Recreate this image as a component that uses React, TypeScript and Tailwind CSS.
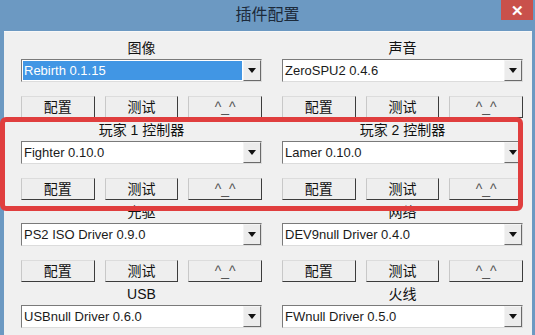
import React from "react";

const FONT = { fontFamily: '"Liberation Sans", "Noto Sans CJK SC", sans-serif' };

function Dropdown({ value, selected }: { value: string; selected?: boolean }) {
  return (
    <div className="flex h-[23px] w-[241px] border border-t-[#7a7a7a] border-l-[#7a7a7a] border-r-[#dcdcdc] border-b-[#dcdcdc] bg-white">
      <div className="flex flex-1 items-stretch p-[1px]">
        <div
          className={
            "flex flex-1 items-center pl-[1px] text-[13px] leading-none " +
            (selected ? "bg-[#4196e4] text-white" : "text-[#1a1a1a]")
          }
        >
          {value}
        </div>
      </div>
      <div className="flex w-[18px] items-center justify-center border border-t-[#f4f4f4] border-l-[#f4f4f4] border-r-[#6a6a6a] border-b-[#6a6a6a] bg-[#ececec]">
        <svg width="8" height="5" viewBox="0 0 8 5">
          <path d="M0 0 H8 L4 5 Z" fill="#111" />
        </svg>
      </div>
    </div>
  );
}

function Btn({ children, light }: { children: React.ReactNode; light?: boolean }) {
  return (
    <div
      className={
        "flex h-[22px] items-center justify-center border border-t-[#dcdcdc] border-l-[#c8c8c8] border-r-[#3c3c3c] border-b-[#3c3c3c] bg-[#eeeeee] text-[14px] leading-none " +
        (light ? "text-[#555]" : "text-[#111]")
      }
    >
      {children}
    </div>
  );
}

function Group({
  label,
  value,
  selected,
  buttons = true,
}: {
  label: string;
  value: string;
  selected?: boolean;
  buttons?: boolean;
}) {
  return (
    <div className="flex w-[241px] flex-col">
      <div className="flex h-[19px] items-start justify-center text-[14px] leading-[17px] text-[#111]">
        {label}
      </div>
      <Dropdown value={value} selected={selected} />
      {buttons && (
        <div className="mt-[14px] mb-[4px] grid grid-cols-3 gap-[10px]">
          <Btn>配置</Btn>
          <Btn>测试</Btn>
          <Btn light>^_^</Btn>
        </div>
      )}
    </div>
  );
}

export default function App() {
  return (
    <div className="relative h-[335px] w-[535px] overflow-hidden bg-[#6c99c2]" style={FONT}>
      <div className="flex h-[31px] items-center justify-center pb-[1px] text-[16px] text-[#1c2a3a]">
        插件配置
      </div>
      <div className="absolute right-[2px] top-0 flex h-[20px] w-[32px] items-center justify-center bg-[#c9514b] text-[15px] font-bold leading-none text-white">
        ✕
      </div>
      <div className="ml-[4px] mr-[3px] flex h-[304px] flex-col border-t border-t-[#f8f8f8] bg-[#f0f0f0] pl-[17px] pt-[8px]">
        <div className="flex gap-[20px]">
          <Group label="图像" value="Rebirth 0.1.15" selected />
          <Group label="声音" value="ZeroSPU2  0.4.6" />
        </div>
        <div className="flex gap-[20px]">
          <Group label="玩家 1 控制器" value="Fighter 0.10.0" />
          <Group label="玩家 2 控制器" value="Lamer 0.10.0" />
        </div>
        <div className="flex gap-[20px]">
          <Group label="光驱" value="PS2 ISO Driver 0.9.0" />
          <Group label="网络" value="DEV9null Driver 0.4.0" />
        </div>
        <div className="flex gap-[20px]">
          <Group label="USB" value="USBnull Driver 0.6.0" buttons={false} />
          <Group label="火线" value="FWnull Driver 0.5.0" buttons={false} />
        </div>
      </div>
      <div className="pointer-events-none absolute left-0 top-[117px] h-[94px] w-[523px] rounded-[6px] border-[5px] border-[#e03e3e]" />
    </div>
  );
}
